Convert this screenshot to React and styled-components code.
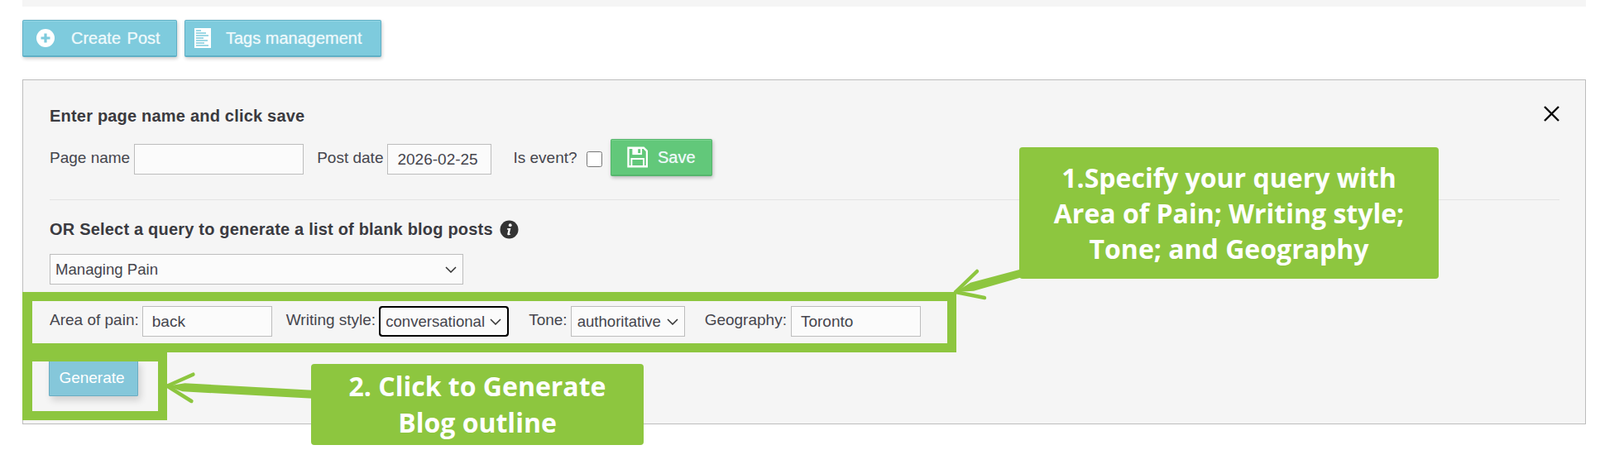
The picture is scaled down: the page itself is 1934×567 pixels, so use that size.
import React from "react";
import styled, { createGlobalStyle } from "styled-components";

const GREEN = "#8dc63f";
const CHEVRON =
  "url(\"data:image/svg+xml,%3Csvg xmlns='http://www.w3.org/2000/svg' width='14' height='8' viewBox='0 0 14 8'%3E%3Cpath d='M1 1l6 6 6-6' fill='none' stroke='%23333' stroke-width='1.5'/%3E%3C/svg%3E\")";

function CreateIcon() {
  return (
    <svg width="22" height="22" viewBox="0 0 22 22">
      <circle cx="11" cy="11" r="11" fill="#fff" />
      <path d="M11 5.5v11M5.5 11h11" stroke="#7ecbdd" strokeWidth="3.2" />
    </svg>
  );
}

function DocIcon() {
  return (
    <svg width="20" height="24" viewBox="0 0 20 24">
      <rect width="20" height="24" fill="#fff" />
      <path
        d="M2 3h6M2 6h12M2 9h15M2 12h9M2 15h14M2 18h10M2 21h15"
        stroke="#7ecbdd"
        strokeWidth="1.3"
      />
    </svg>
  );
}

function SaveIcon() {
  return (
    <svg width="26" height="26" viewBox="0 0 26 26" fill="none">
      <path d="M1.5 1.5h19l4 4v19h-23z" stroke="#fff" strokeWidth="2.4" />
      <path d="M6.5 2v8h12V2z" fill="#fff" />
      <rect x="13.5" y="3" width="3" height="5" fill="#62c87a" />
      <path d="M5.5 24v-9h15v9" stroke="#fff" strokeWidth="2" />
    </svg>
  );
}

function InfoIcon() {
  return (
    <svg width="23" height="23" viewBox="0 0 23 23">
      <circle cx="11.5" cy="11.5" r="11" fill="#333" />
      <circle cx="12.7" cy="6.2" r="1.9" fill="#fff" />
      <path
        d="M9 10.2l4.4-.5-1.6 6.6c-.1.5.4.6 1.5.2l-.2 1.1c-1.6.9-4.1 1-3.8-.9l1.2-4.9-1.6-.3z"
        fill="#fff"
      />
    </svg>
  );
}

function App() {
  return (
    <>
      <GlobalStyle />
      <Page>
        <TopBar />
        <Toolbar>
          <ActionButton $width={187} $pad={16}>
            <CreateIcon />
            <ButtonText $gap={20} $words={2}>Create Post</ButtonText>
          </ActionButton>
          <ActionButton $width={238} $pad={11}>
            <DocIcon />
            <ButtonText $gap={18}>Tags management</ButtonText>
          </ActionButton>
        </Toolbar>

        <Panel>
          <CloseButton>
            <svg width="19" height="19" viewBox="0 0 19 19">
              <path d="M1 1l17 17M18 1L1 18" stroke="#000" strokeWidth="2.4" />
            </svg>
          </CloseButton>

          <Heading>Enter page name and click save</Heading>
          <FieldRow $top={22}>
            <FieldLabel $right={5}>Page name</FieldLabel>
            <TextInput $width={205} defaultValue="" />
            <FieldLabel $left={16} $right={5}>Post date</FieldLabel>
            <TextInput $width={126} $tight defaultValue="2026-02-25" />
            <FieldLabel $left={26}>Is event?</FieldLabel>
            <EventCheck type="checkbox" />
            <SaveButton>
              <SaveIcon />
              <ButtonText $gap={12}>Save</ButtonText>
            </SaveButton>
          </FieldRow>

          <Divider />

          <QueryHeading>
            OR Select a query to generate a list of blank blog posts
            <InfoIcon />
          </QueryHeading>
          <QuerySelect defaultValue="Managing Pain">
            <option>Managing Pain</option>
          </QuerySelect>

          <FieldRow $top={26}>
            <FieldLabel $right={4}>Area of pain:</FieldLabel>
            <TextInput $width={157} $roomy defaultValue="back" />
            <FieldLabel $left={17}>Writing style:</FieldLabel>
            <InlineSelect $width={157} $focused defaultValue="conversational">
              <option>conversational</option>
            </InlineSelect>
            <FieldLabel $left={24}>Tone:</FieldLabel>
            <InlineSelect $width={138} defaultValue="authoritative">
              <option>authoritative</option>
            </InlineSelect>
            <FieldLabel $left={24} $right={5}>Geography:</FieldLabel>
            <TextInput $width={157} $roomy defaultValue="Toronto" />
          </FieldRow>

          <GenerateButton>Generate</GenerateButton>

          <QueryFrame />
          <GenerateFrame />

          <ArrowOne width="86" height="45" viewBox="0 0 86 45">
            <path d="M5 33L23 21.7 83 5.7V15.7L27 31.7Z" fill={GREEN} />
            <path
              d="M5 33L31 8M5 33L40 40"
              stroke={GREEN}
              strokeWidth="4.5"
              strokeLinecap="round"
              fill="none"
            />
          </ArrowOne>
          <ArrowTwo width="182" height="42" viewBox="0 0 182 42">
            <path d="M4 18.7L25.5 15.3 180 23.7V33.7L22.7 25.3Z" fill={GREEN} />
            <path
              d="M4 18.7L35.4 4.7M4 18.7L33.4 37"
              stroke={GREEN}
              strokeWidth="4.5"
              strokeLinecap="round"
              fill="none"
            />
          </ArrowTwo>

          <CalloutOne>
            1.Specify your query with
            <br />
            Area of Pain; Writing style;
            <br />
            Tone; and Geography
          </CalloutOne>
          <CalloutTwo>
            2. Click to Generate
            <br />
            Blog outline
          </CalloutTwo>
        </Panel>
      </Page>
    </>
  );
}

export default App;

const GlobalStyle = createGlobalStyle`
  body {
    margin: 0;
    background: #fff;
  }
  * {
    box-sizing: border-box;
  }
`;

const Page = styled.div`
  height: 567px;
  padding: 0 17px 0 27px;
  font-family: "Liberation Sans", Arial, sans-serif;
  color: #444;
`;

const TopBar = styled.div`
  height: 8px;
  background: #f5f5f5;
`;

const Toolbar = styled.div`
  display: flex;
  gap: 9px;
  margin-top: 16px;
`;

const ActionButton = styled.button`
  display: flex;
  align-items: center;
  width: ${(p) => p.$width}px;
  height: 45px;
  padding: 0 ${(p) => p.$pad}px;
  background: #7ecbdd;
  border: 1px solid #5fb0c6;
  border-bottom-width: 2px;
  border-radius: 2px;
  box-shadow: inset 0 1px 0 #93d6e5, 1px 2px 4px rgba(0, 0, 0, 0.2);
`;

const ButtonText = styled.span`
  margin-left: ${(p) => p.$gap}px;
  font-family: "Liberation Sans", Arial, sans-serif;
  font-size: 20px;
  word-spacing: ${(p) => p.$words || 0}px;
  color: #eef9fb;
  text-shadow: 0 0 1px rgba(255, 255, 255, 0.6);
  white-space: nowrap;
`;

const Panel = styled.div`
  position: relative;
  height: 417px;
  margin-top: 27px;
  padding: 31px 31px 0 32px;
  background: #f5f5f5;
  border: 1px solid #bdbdbd;
`;

const CloseButton = styled.div`
  position: absolute;
  top: 31px;
  right: 31px;
  line-height: 0;
`;

const Heading = styled.div`
  font-size: 20px;
  font-weight: 700;
  line-height: 24px;
  letter-spacing: 0.2px;
  color: #3a3a40;
`;

const QueryHeading = styled(Heading)`
  display: flex;
  align-items: center;
  gap: 8px;
  margin-top: 23px;
`;

const FieldRow = styled.div`
  display: flex;
  align-items: flex-start;
  height: 37px;
  margin-top: ${(p) => p.$top}px;
`;

const FieldLabel = styled.label`
  margin-left: ${(p) => p.$left || 0}px;
  margin-right: ${(p) => p.$right ?? 4}px;
  font-size: 19px;
  line-height: 33px;
  color: #45454d;
  white-space: nowrap;
`;

const TextInput = styled.input`
  width: ${(p) => p.$width}px;
  height: 37px;
  padding: 0 ${(p) => (p.$roomy || p.$tight ? 11 : 8)}px;
  background: #fbfbfb;
  border: 1px solid #bdbdbd;
  border-radius: 0;
  font-family: "Liberation Sans", Arial, sans-serif;
  font-size: 19px;
  color: #45454d;
  outline: none;
`;

const EventCheck = styled.input`
  width: 19px;
  height: 19px;
  margin: 9px 0 0 7px;
`;

const SaveButton = styled.button`
  display: flex;
  align-items: center;
  width: 123px;
  height: 45px;
  margin: -6px 0 0 10px;
  padding: 0 19px;
  background: #62c87a;
  border: 1px solid #55b66c;
  border-bottom-width: 2px;
  border-radius: 2px;
  box-shadow: inset 0 1px 0 #7bd590, 1px 2px 4px rgba(0, 0, 0, 0.25);
`;

const Divider = styled.div`
  height: 1px;
  margin-top: 30px;
  background: #e3e3e3;
`;

const BaseSelect = styled.select`
  appearance: none;
  height: 37px;
  background: #fbfbfb ${CHEVRON} no-repeat right 7px center;
  border: 1px solid #bdbdbd;
  border-radius: 0;
  font-family: "Liberation Sans", Arial, sans-serif;
  font-size: 18.6px;
  color: #45454d;
`;

const QuerySelect = styled(BaseSelect)`
  display: block;
  width: 500px;
  margin-top: 18px;
  padding: 0 0 0 6px;
`;

const InlineSelect = styled(BaseSelect)`
  width: ${(p) => p.$width}px;
  padding: 0 0 0 ${(p) => (p.$focused ? 6 : 7)}px;
  border: ${(p) => (p.$focused ? "2px solid #000" : "1px solid #bdbdbd")};
  border-radius: ${(p) => (p.$focused ? 4 : 0)}px;
  outline: ${(p) => (p.$focused ? "1px solid #000" : "none")};
  outline-offset: -2px;
`;

const GenerateButton = styled.button`
  display: block;
  width: 108px;
  height: 44px;
  margin-top: 28px;
  margin-left: -1px;
  padding: 0 4px 0 0;
  background: #85c7da;
  border: 1px solid #6aacc2;
  border-radius: 1px;
  box-shadow: 3px 5px 9px rgba(0, 0, 0, 0.15);
  font-family: "Liberation Sans", Arial, sans-serif;
  font-size: 19px;
  color: #fff;
`;

const QueryFrame = styled.div`
  position: absolute;
  left: -1px;
  top: 256px;
  width: 1129px;
  height: 73px;
  border: 11px solid ${GREEN};
  border-left-width: 12px;
`;

const GenerateFrame = styled.div`
  position: absolute;
  left: -1px;
  top: 329px;
  width: 175px;
  height: 82px;
  border: 11px solid ${GREEN};
  border-left-width: 12px;
`;

const ArrowOne = styled.svg`
  position: absolute;
  left: 1122px;
  top: 223px;
`;

const ArrowTwo = styled.svg`
  position: absolute;
  left: 170px;
  top: 351px;
`;

const Callout = styled.div`
  position: absolute;
  display: flex;
  align-items: center;
  justify-content: center;
  background: ${GREEN};
  border-radius: 4px;
  font-family: "Open Sans", "Noto Sans", sans-serif;
  font-weight: 700;
  font-size: 32px;
  text-align: center;
  color: #fff;
`;

const CalloutOne = styled(Callout)`
  left: 1204px;
  top: 81px;
  width: 507px;
  height: 159px;
  line-height: 43px;
`;

const CalloutTwo = styled(Callout)`
  left: 348px;
  top: 343px;
  width: 402px;
  height: 98px;
  line-height: 44px;
`;
